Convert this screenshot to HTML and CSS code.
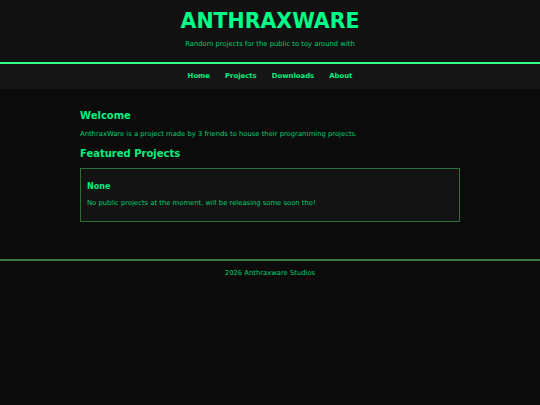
FILE: index.html
```html
<!DOCTYPE html>
<html>
<head>
<meta charset="utf-8">
<link rel="stylesheet" href="styles.css">
</head>
<body>
<header class="site-header">
  <h1 class="title">ANTHRAXWARE</h1>
  <p class="tagline">Random projects for the public to toy around with</p>
</header>
<nav class="site-nav">
  <a href="#">Home</a>
  <a href="#">Projects</a>
  <a href="#">Downloads</a>
  <a href="#">About</a>
</nav>
<main class="content">
  <h2 class="section-title">Welcome</h2>
  <p class="text intro">AnthraxWare is a project made by 3 friends to house their programming projects.</p>
  <h2 class="section-title">Featured Projects</h2>
  <div class="card">
    <h3 class="card-title">None</h3>
    <p class="text card-text">No public projects at the moment, will be releasing some soon tho!</p>
  </div>
</main>
<footer class="site-footer">
  <p>2026 Anthraxware Studios</p>
</footer>
</body>
</html>
```
FILE: styles.css
```css
html, body {
  margin: 0;
  padding: 0;
  background: #0b0b0b;
  font-family: "DejaVu Sans", Verdana, sans-serif;
  color: #00d070;
}
.site-header {
  background: #111111;
  text-align: center;
  padding: 9px 0 14px;
  border-bottom: 2px solid #33ff88;
}
.title {
  margin: 0;
  font-size: 20.5px;
  line-height: 24px;
  color: #00ff88;
}
.tagline {
  margin: 7px 0 0;
  font-size: 6.8px;
  line-height: 8px;
}
.site-nav {
  background: #151515;
  display: flex;
  justify-content: center;
  gap: 15px;
  padding: 8px 0;
}
.site-nav a {
  color: #00f080;
  font-weight: bold;
  font-size: 6.9px;
  line-height: 9px;
  text-decoration: none;
}
.content {
  width: 380px;
  margin: 0 auto;
  padding: 21px 0 37px;
}
.section-title {
  margin: 0;
  font-size: 10px;
  line-height: 12px;
  color: #00f080;
}
.text {
  margin: 0;
  font-size: 6.8px;
  line-height: 9px;
}
.intro {
  margin: 8px 0 9px;
}
.card {
  background: #131313;
  border: 1px solid #2f6f38;
  padding: 13px 6px 13px;
  margin-top: 8px;
}
.card-title {
  margin: 0;
  font-size: 8px;
  line-height: 10px;
  color: #00f080;
}
.card-text {
  margin-top: 7px;
}
.site-footer {
  border-top: 2px solid #3a7a3a;
  text-align: center;
  padding: 8px 0;
}
.site-footer p {
  margin: 0;
  font-size: 6.8px;
  line-height: 9px;
}
```
